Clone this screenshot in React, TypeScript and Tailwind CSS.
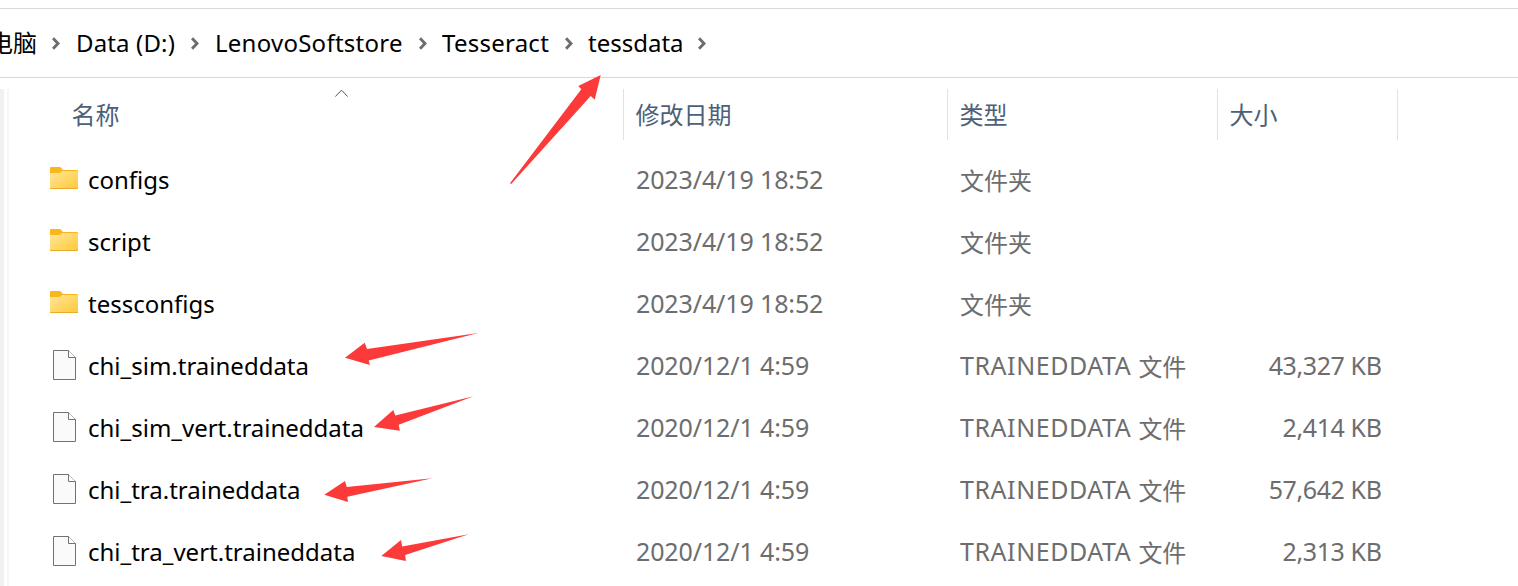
const FONT = "font-['Noto_Sans','Noto_Sans_CJK_SC',sans-serif]";

const crumbs = [
  { name: "Data (D:)", cls: "w-[139px] gap-4 tracking-[0.15px]" },
  { name: "LenovoSoftstore", cls: "w-[227.5px] gap-4 tracking-[0.25px]" },
  { name: "Tesseract", cls: "w-[146.5px] gap-[15.5px] tracking-[0.25px]" },
  { name: "tessdata", cls: "w-[133px] gap-[15px]" },
];

const rows = [
  { name: "configs", folder: true, date: "2023/4/19 18:52", size: "" },
  { name: "script", folder: true, date: "2023/4/19 18:52", size: "" },
  { name: "tessconfigs", folder: true, date: "2023/4/19 18:52", size: "" },
  { name: "chi_sim.traineddata", folder: false, date: "2020/12/1 4:59", size: "43,327 KB" },
  { name: "chi_sim_vert.traineddata", folder: false, date: "2020/12/1 4:59", size: "2,414 KB" },
  { name: "chi_tra.traineddata", folder: false, date: "2020/12/1 4:59", size: "57,642 KB" },
  { name: "chi_tra_vert.traineddata", folder: false, date: "2020/12/1 4:59", size: "2,313 KB" },
];

const headers = [
  { label: "修改日期", cls: "w-[324px]" },
  { label: "类型", cls: "w-[270px]" },
  { label: "大小", cls: "w-[180px]" },
];

const arrows = [
  "600.7,75 578.3,86 581.3,89.3 510,183.2 511.2,184 590.7,96 594.7,99.7",
  "345,357.7 364.7,342.8 367,349 478.5,333 368.7,360.5 369.9,365",
  "374,427 393.3,410 395.3,415.6 473.5,396.2 398.7,424.7 399.9,430.8",
  "324.3,494.7 345,481 346.8,487 432.3,478.3 347.3,496.7 347.9,502",
  "381.3,556 401,540 402.2,546.6 468.8,534.3 405.2,555 405.9,561",
];

function Chevron() {
  return (
    <svg className="mt-px h-[13px] w-2 shrink-0" viewBox="0 0 8 13" fill="none" stroke="#6d6d6d" strokeWidth="3">
      <path d="M1 1.2 L6 6.5 L1 11.8" />
    </svg>
  );
}

function FolderIcon() {
  return (
    <svg className="-mt-[5px] h-[22px] w-7" viewBox="0 0 28 22">
      <defs>
        <linearGradient id="folder" x1="0" y1="0" x2="1" y2="1">
          <stop offset="0" stopColor="#ffe69c" />
          <stop offset="1" stopColor="#ffc937" />
        </linearGradient>
      </defs>
      <path d="M0 1 Q0 0 1 0 H9.5 Q10.5 0 11.5 1.2 L13 3 H27 Q28 3 28 4 V10 H0 Z" fill="#f9b71b" />
      <path d="M0 7 Q0 6 1 6 H9 Q10.5 6 12 4 H28 V21 Q28 22 27 22 H1 Q0 22 0 21 Z" fill="url(#folder)" />
      <path d="M0 20.9 H28 V21 Q28 22 27 22 H1 Q0 22 0 21 Z" fill="#e9ac2a" />
    </svg>
  );
}

function FileIcon() {
  return (
    <svg className="-mt-[2px] ml-[3px] h-[30px] w-[23px]" viewBox="0 0 23 30" stroke="#727272">
      <path d="M0.5 0.5 H15.5 L22.5 7.5 V29.5 H0.5 Z" fill="#fafafa" />
      <path d="M15.5 0.5 V7.5 H22.5" fill="#fff" />
    </svg>
  );
}

export default function App() {
  return (
    <div className={`relative flex h-[586px] w-[1518px] flex-col overflow-hidden bg-white text-[24px] leading-none whitespace-nowrap ${FONT}`}>
      <div className="h-[9px] shrink-0 border-b border-[#d9d9d9]" />
      <nav className="flex h-[69px] shrink-0 items-center border-b border-[#d9d9d9] text-black">
        <span className="-ml-[11px] w-[63px] shrink-0">电脑</span>
        {crumbs.map((c) => (
          <span key={c.name} className={`flex shrink-0 items-center ${c.cls}`}>
            <Chevron />
            <span>{c.name}</span>
          </span>
        ))}
        <Chevron />
      </nav>
      <div className="flex grow pt-[11px]">
        <div className="w-1 bg-[#f0f0f0]" />
        <div className="ml-[3px] w-0.5 bg-[#f7f7f7]" />
        <main className="grow">
          <div className="flex h-[51px] text-[#4c607a]">
            <div className="relative flex w-[614px] items-center pt-px pl-[62.5px]">
              名称
              <svg className="absolute top-0 left-[326px] h-2 w-[13px]" viewBox="0 0 13 8" fill="none" stroke="#555">
                <path d="M0.3 7.6 L6.5 1.2 L12.7 7.6" />
              </svg>
            </div>
            {headers.map((h) => (
              <div key={h.label} className={`flex shrink-0 items-center border-l border-[#e2e2e2] pt-px pl-[11.5px] ${h.cls}`}>
                {h.label}
              </div>
            ))}
            <div className="w-px bg-[#e2e2e2]" />
          </div>
          <div className="pt-[9px]">
            {rows.map((r) => (
              <div key={r.name} className="flex h-[62px] items-center text-[#6d6d6d]">
                <div className="flex w-[627px] items-center pl-[41px] text-black">
                  <span className="w-[38px]">{r.folder ? <FolderIcon /> : <FileIcon />}</span>
                  <span>{r.name}</span>
                </div>
                <div className="w-[324px] pb-[2px] text-[25px] tracking-[-0.12px]">{r.date}</div>
                <div className="flex w-[260px] items-center">
                  {!r.folder && <span className="pb-[2px] text-[25px] tracking-[0.56px] whitespace-pre">TRAINEDDATA </span>}
                  <span className="pt-[2px]">{r.folder ? "文件夹" : "文件"}</span>
                </div>
                <div className="w-[161.5px] pb-[2px] text-right text-[25px] tracking-[-0.4px]">{r.size}</div>
              </div>
            ))}
          </div>
        </main>
      </div>
      <svg className="pointer-events-none absolute inset-0 h-full w-full" viewBox="0 0 1518 586" fill="#fc3a3a">
        {arrows.map((p) => (
          <polygon key={p} points={p} />
        ))}
      </svg>
    </div>
  );
}
